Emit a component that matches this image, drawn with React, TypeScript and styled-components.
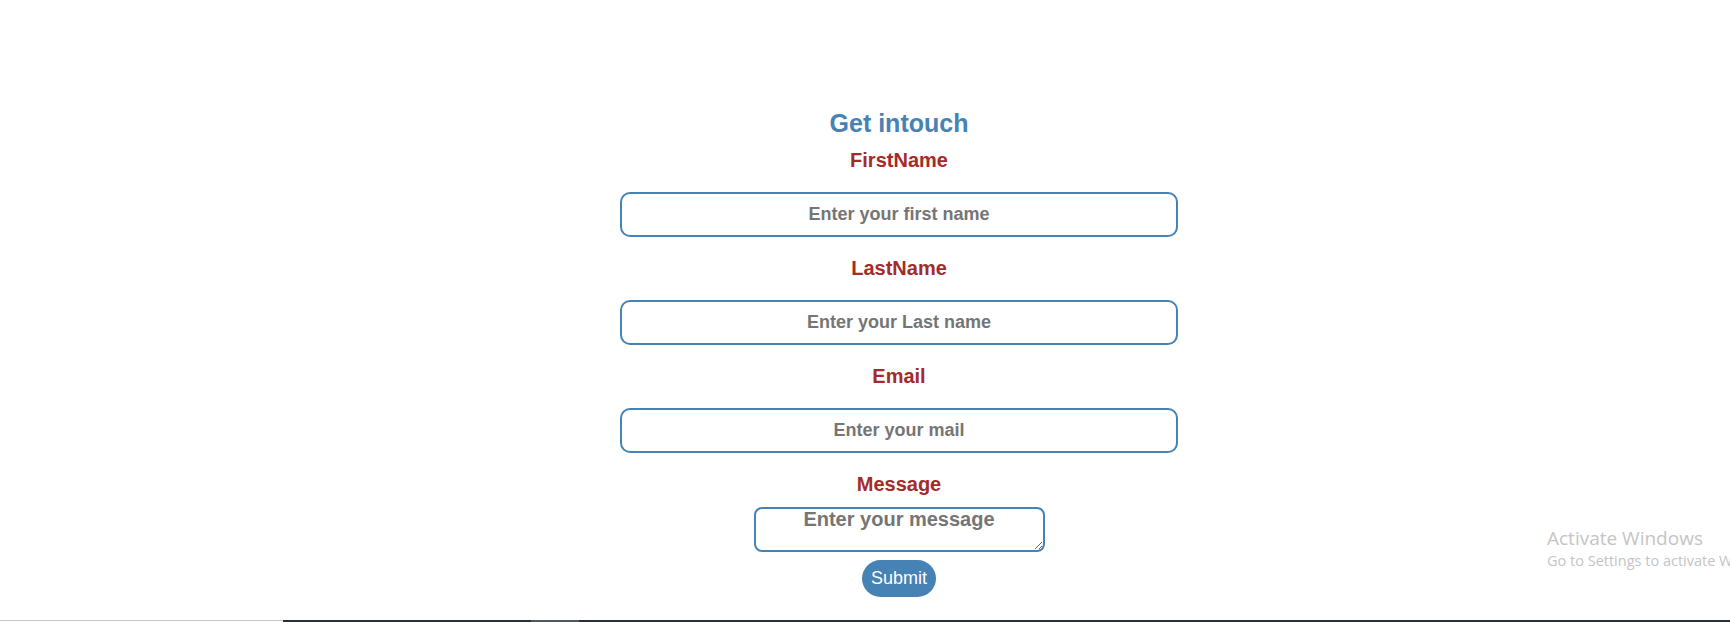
import styled, { createGlobalStyle } from 'styled-components';

const GlobalStyle = createGlobalStyle`
    html, body {
        margin: 0;
        padding: 0;
        overflow: hidden;
        background: #fff;
    }
    body {
        font-family: "Liberation Sans", Arial, sans-serif;
    }
`;

const Page = styled.div`
    position: relative;
    height: 622px;
    display: flex;
    flex-direction: column;
    overflow: hidden;
`;

const Main = styled.main`
    flex: 1;
    display: flex;
    justify-content: center;
    padding: 109px 0 0 68px;
`;

const Form = styled.form`
    width: 558px;
    display: flex;
    flex-direction: column;
    align-items: center;
`;

const Title = styled.h2`
    margin: 0 0 11px;
    font-size: 25px;
    font-weight: bold;
    color: steelblue;
`;

const Label = styled.label<{ $gap: number }>`
    display: block;
    margin-bottom: ${p => p.$gap}px;
    font-size: 20px;
    font-weight: bold;
    color: brown;
`;

const Input = styled.input`
    box-sizing: border-box;
    width: 100%;
    height: 45px;
    margin: 0 0 20px;
    padding: 0;
    border: 2px solid steelblue;
    border-radius: 10px;
    outline: none;
    text-align: center;
    font-family: "Liberation Sans", Arial, sans-serif;
    font-size: 18px;
    font-weight: bold;

    &::placeholder {
        color: #757575;
    }
`;

const MessageBox = styled.textarea`
    box-sizing: border-box;
    width: 291px;
    height: 45px;
    margin: 0 0 8px;
    padding: 0;
    border: 2px solid steelblue;
    border-radius: 8px;
    outline: none;
    text-align: center;
    font-family: "Liberation Sans", Arial, sans-serif;
    font-size: 20px;
    font-weight: bold;
    line-height: 1;

    &::placeholder {
        color: #757575;
    }
`;

const SubmitButton = styled.button`
    padding: 8px 8.5px;
    border: none;
    border-radius: 20px;
    background: steelblue;
    color: #fff;
    font-family: "Liberation Sans", Arial, sans-serif;
    font-size: 18px;
    cursor: pointer;
`;

const Footer = styled.footer`
    height: 2px;
    display: flex;
`;

const FooterEdge = styled.div`
    width: 283px;
    border-top: 1px solid #c6c6c6;
`;

const FooterBar = styled.div`
    flex: 1;
    display: flex;
    background: #21323c;
`;

const FooterThumb = styled.div`
    width: 48px;
    margin-left: 248px;
    background: #4b5961;
`;

const Watermark = styled.div`
    position: absolute;
    left: 1547px;
    top: 527px;
    color: #c4c4c4;
    font-family: "Open Sans", "Noto Sans", sans-serif;
    white-space: nowrap;
    pointer-events: none;
`;

const WatermarkTitle = styled.div`
    font-size: 19px;
    line-height: 23px;
`;

const WatermarkText = styled.div`
    font-size: 14.5px;
    line-height: 22px;
`;

const fields = [
    { label: 'FirstName', placeholder: 'Enter your first name', type: 'text' },
    { label: 'LastName', placeholder: 'Enter your Last name', type: 'text' },
    { label: 'Email', placeholder: 'Enter your mail', type: 'email' },
];

export default function App() {
    return (
        <>
            <GlobalStyle />
            <Page>
                <Main>
                    <Form onSubmit={e => e.preventDefault()}>
                        <Title>Get intouch</Title>
                        {fields.map(f => (
                            <Field key={f.label} {...f} />
                        ))}
                        <Label $gap={11}>Message</Label>
                        <MessageBox placeholder="Enter your message" />
                        <SubmitButton type="submit">Submit</SubmitButton>
                    </Form>
                </Main>
                <Footer>
                    <FooterEdge />
                    <FooterBar>
                        <FooterThumb />
                    </FooterBar>
                </Footer>
                <Watermark>
                    <WatermarkTitle>Activate Windows</WatermarkTitle>
                    <WatermarkText>Go to Settings to activate Windows.</WatermarkText>
                </Watermark>
            </Page>
        </>
    );
}

function Field({ label, placeholder, type }: { label: string; placeholder: string; type: string }) {
    return (
        <>
            <Label $gap={20}>{label}</Label>
            <Input type={type} placeholder={placeholder} />
        </>
    );
}
